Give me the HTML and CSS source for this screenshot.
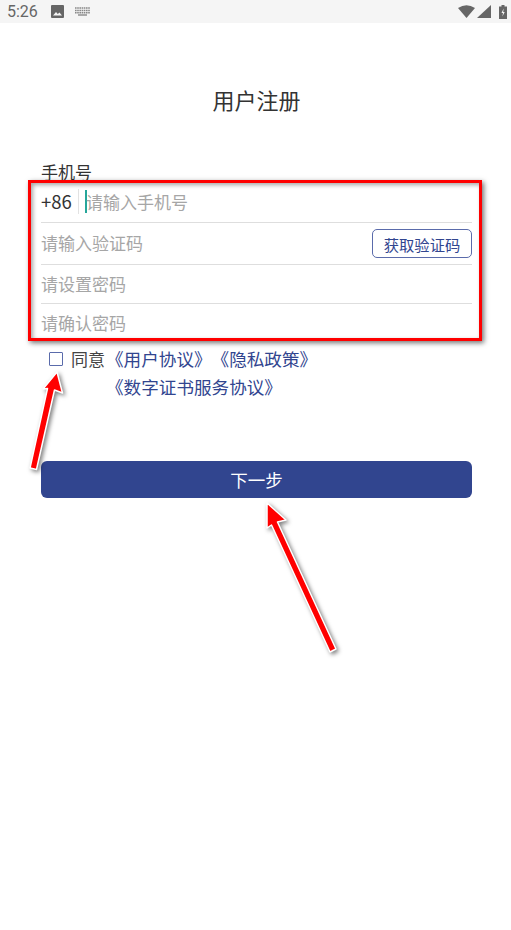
FILE: index.html
```html
<!DOCTYPE html>
<html lang="zh-CN">

<head>
  <meta charset="UTF-8">
  <meta name="viewport" content="width=device-width, initial-scale=1.0">
  <title>用户注册</title>
  <link rel="stylesheet" href="styles.css">
</head>

<body>
  <!-- 状态栏 -->
  <div class="status-bar">
    <span class="time">5:26</span>
    <svg class="icon-image" width="13" height="13" viewBox="0 0 13 13">
      <rect width="13" height="13" rx="1" fill="#666" />
      <path d="M2 10.5 L5 7 L6.8 9 L8.5 7.4 L11 10.5 Z" fill="#f5f5f5" />
    </svg>
    <svg class="icon-keyboard" width="15" height="9" viewBox="0 0 15 9">
      <path d="M0 1h15M0 3.5h15M0 5.8h15" stroke="#888" stroke-width="1.4" stroke-dasharray="1.6 .6" />
      <path d="M3 8h9" stroke="#888" stroke-width="1.4" />
    </svg>
    <span class="status-right">
      <svg width="17" height="13" viewBox="0 0 17 13">
        <path d="M0 3 Q8.5 -2.5 17 3 L8.5 13 Z" fill="#666" />
      </svg>
      <svg width="14" height="13" viewBox="0 0 14 13">
        <path d="M14 0 V13 H0 Z" fill="#666" />
      </svg>
      <svg width="8" height="14" viewBox="0 0 8 14">
        <path d="M2.5 0h3v1.5H8V14H0V1.500h2.500Z" fill="#666" />
        <path d="M4.600 3.500 2.500 8h1.500l-.6 3.500L5.700 7H4.200Z" fill="#f5f5f5" />
      </svg>
    </span>
  </div>

  <div class="page">
    <h1 class="title">用户注册</h1>

    <div class="field-label">手机号</div>
    <div class="form">
      <div class="row row-phone">
        <span class="prefix">+86</span>
        <span class="caret"></span>
        <span class="hint">请输入手机号</span>
      </div>
      <div class="row row-code">
        <span class="hint">请输入验证码</span>
        <button class="code-btn" type="button">获取验证码</button>
      </div>
      <div class="row row-pwd">
        <span class="hint">请设置密码</span>
      </div>
      <div class="row row-last">
        <span class="hint">请确认密码</span>
      </div>
    </div>

    <div class="agree">
      <span class="check"></span>
      <span class="agree-text">同意</span>
      <div class="links">
        <a href="javascript:">《用户协议》</a><a href="javascript:">《隐私政策》</a>
        <a href="javascript:">《数字证书服务协议》</a>
      </div>
    </div>

    <button class="next-btn" type="button">下一步</button>
  </div>

  <!-- 截图上的标注 -->
  <div class="mark-box"></div>
  <svg class="mark-arrows" width="511" height="930" viewBox="0 0 511 930">
    <path class="arrow" d="M57 372 L62.500 393 L54.500 390 L36.500 469.500 L30 468 L47.500 388.500 L43 389 Z" />
    <path class="arrow" d="M267 503 L286 520 L277.500 522 L336 649 L330 652 L271.500 525 L267 528 Z" />
  </svg>
</body>

</html>
```

FILE: styles.css
```css
* {
  box-sizing: border-box;
}

body {
  margin: 0;
  height: 930px;
  position: relative;
  overflow: hidden;
  background-color: white;
  font-family: "Noto Sans CJK SC", "Noto Sans", sans-serif;
  color: #333;
  text-spacing-trim: space-all;
}

.status-bar {
  height: 23px;
  background-color: #f5f5f5;
  display: flex;
  align-items: center;
  padding: 0 4px 0 7px;
}

.time {
  font-family: Roboto, sans-serif;
  font-size: 16px;
  color: #666;
  width: 44px;
}

.icon-image {
  margin-right: 11px;
}

.status-right {
  margin-left: auto;
  display: flex;
  align-items: center;
  gap: 2px;
}

.status-right svg:last-child {
  margin-left: 6px;
}

.page {
  padding: 0 39px 0 41px;
}

.title {
  margin: 0;
  padding-top: 59px;
  height: 139px;
  font-size: 22px;
  line-height: 34px;
  font-weight: 400;
  text-align: center;
  color: #333;
}

.field-label {
  font-size: 17px;
  line-height: 20px;
  margin-bottom: 2px;
}

.row {
  display: flex;
  align-items: center;
  font-size: 17px;
  padding-bottom: 3px;
  border-bottom: 1px solid #dedede;
}

.row-phone {
  height: 39px;
}

.row-code {
  height: 42px;
  padding-bottom: 2px;
  justify-content: space-between;
}

.row-pwd {
  height: 39px;
  padding-bottom: 1px;
}

.row-last {
  height: 38px;
  padding-bottom: 1px;
  border-bottom: none;
}

.prefix {
  width: 38px;
  height: 25px;
  line-height: 25px;
  font-size: 18.500px;
  border-right: 1px solid #e2e2e2;
}

.caret {
  width: 2px;
  height: 23px;
  margin-left: 6px;
  margin-right: -1px;
  background-color: #26a69a;
}

.hint {
  color: #a6a6a6;
}

.code-btn {
  width: 100px;
  height: 29px;
  margin-top: 2px;
  padding: 0;
  background-color: white;
  border: 1px solid #5a6bab;
  border-radius: 5px;
  font-family: inherit;
  font-size: 15.300px;
  color: #31458f;
}

.agree {
  display: flex;
  align-items: flex-start;
  margin-top: 3px;
  padding-left: 8px;
  font-size: 17px;
  line-height: 28px;
}

.check {
  width: 14px;
  height: 14px;
  margin-top: 7px;
  margin-right: 8px;
  border: 1.500px solid #5a6bab;
  border-radius: 1px;
}

.agree-text {
  color: #444;
}

.links {
  width: 214px;
  margin-left: 1px;
  font-size: 17.600px;
}

.links a {
  color: #31458f;
  text-decoration-line: none;
}

.next-btn {
  display: block;
  width: 100%;
  height: 37px;
  margin-top: 60px;
  padding: 0;
  background-color: #31458f;
  border: none;
  border-radius: 6px;
  font-family: inherit;
  font-size: 17.500px;
  color: white;
}

/* 标注层，盖在页面上面 */
.mark-box {
  position: absolute;
  left: 28px;
  top: 180px;
  width: 454px;
  height: 161px;
  border: 3px solid #f00;
  box-shadow: 2px 2px 5px rgba(0, 0, 0, 0.55), inset 2px 2px 4px rgba(0, 0, 0, 0.35);
}

.mark-arrows {
  position: absolute;
  left: 0;
  top: 0;
  filter: drop-shadow(2px 2px 2px rgba(0, 0, 0, 0.5));
}

.arrow {
  fill: #f00;
  stroke: white;
  stroke-width: 1.500px;
  stroke-linejoin: round;
}
```
